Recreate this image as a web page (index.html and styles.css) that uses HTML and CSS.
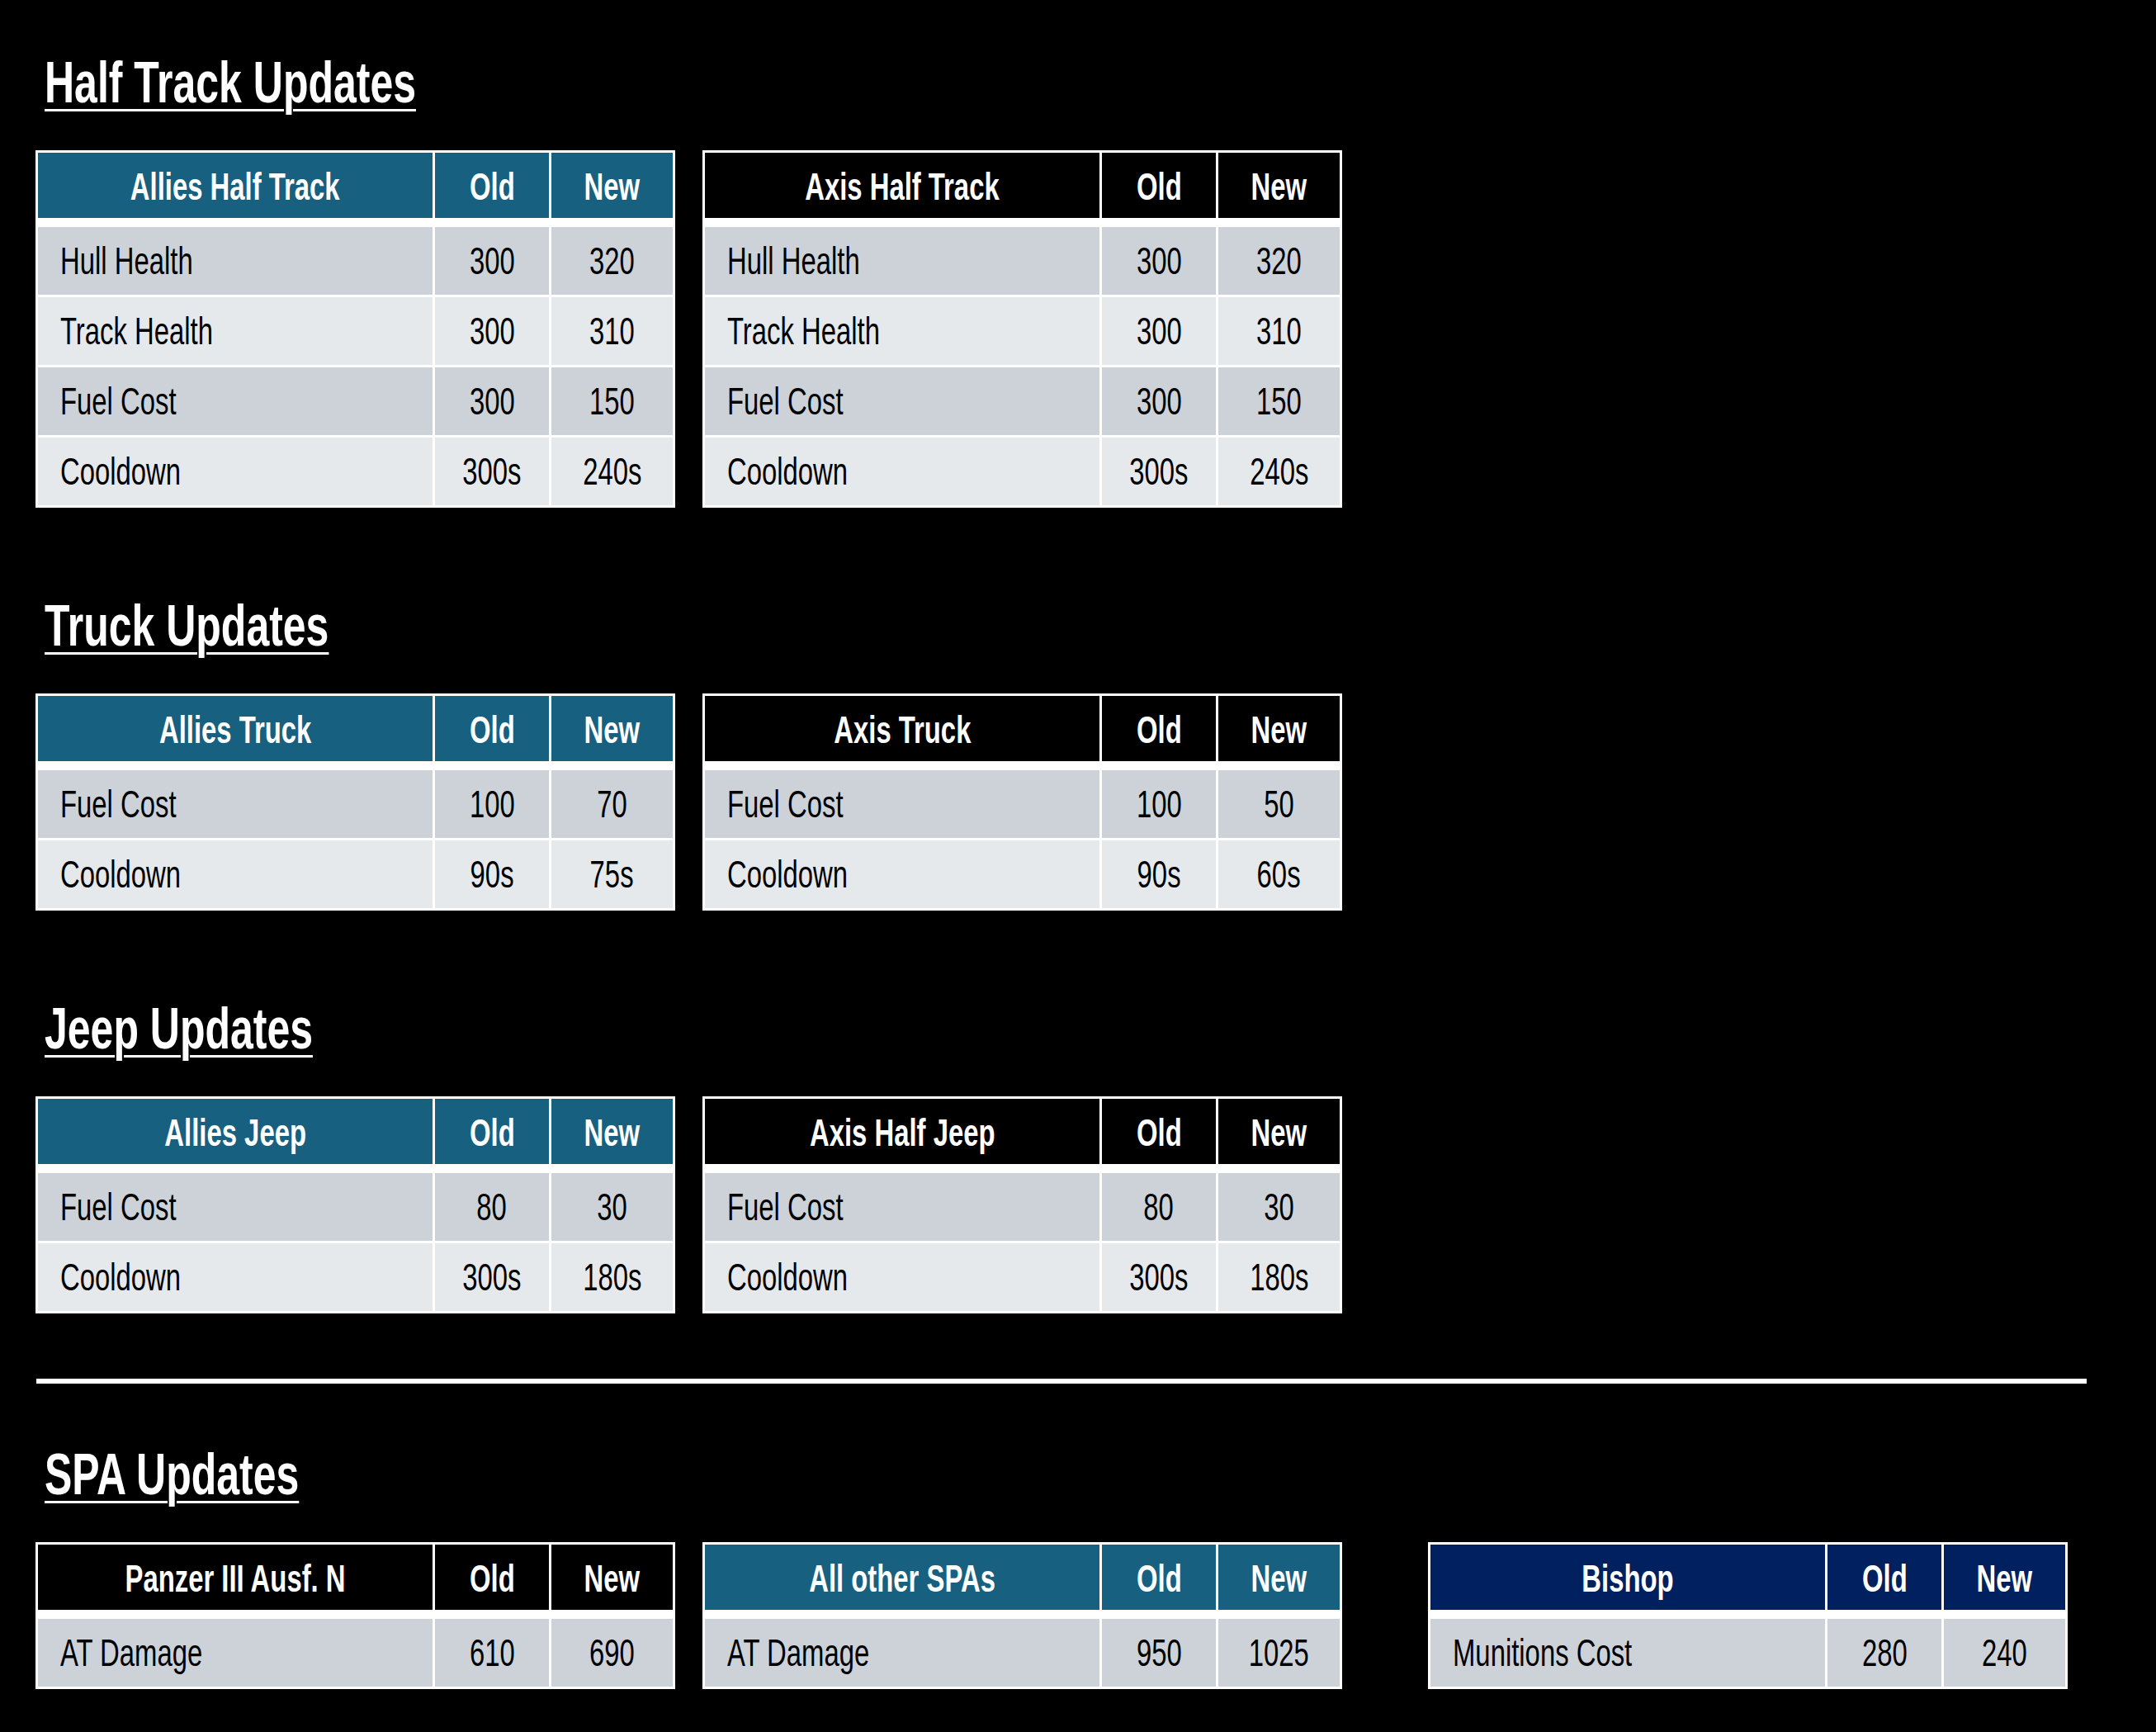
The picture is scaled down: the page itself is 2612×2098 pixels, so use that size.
FILE: index.html
```html
<!DOCTYPE html>
<html lang="en">
<head>
<meta charset="utf-8">
<title>Vehicle Updates</title>
<link rel="stylesheet" href="styles.css">
</head>
<body>
<div class="page">

  <section class="section">
    <h2 class="section-title"><span class="txt">Half Track Updates</span></h2>
    <div class="tables">
      <div class="stat-table allies">
        <div class="row head"><div class="cell label"><span>Allies Half Track</span></div><div class="cell"><span>Old</span></div><div class="cell"><span>New</span></div></div>
        <div class="row body"><div class="cell label"><span>Hull Health</span></div><div class="cell"><span>300</span></div><div class="cell"><span>320</span></div></div>
        <div class="row body"><div class="cell label"><span>Track Health</span></div><div class="cell"><span>300</span></div><div class="cell"><span>310</span></div></div>
        <div class="row body"><div class="cell label"><span>Fuel Cost</span></div><div class="cell"><span>300</span></div><div class="cell"><span>150</span></div></div>
        <div class="row body"><div class="cell label"><span>Cooldown</span></div><div class="cell"><span>300s</span></div><div class="cell"><span>240s</span></div></div>
      </div>
      <div class="stat-table axis">
        <div class="row head"><div class="cell label"><span>Axis Half Track</span></div><div class="cell"><span>Old</span></div><div class="cell"><span>New</span></div></div>
        <div class="row body"><div class="cell label"><span>Hull Health</span></div><div class="cell"><span>300</span></div><div class="cell"><span>320</span></div></div>
        <div class="row body"><div class="cell label"><span>Track Health</span></div><div class="cell"><span>300</span></div><div class="cell"><span>310</span></div></div>
        <div class="row body"><div class="cell label"><span>Fuel Cost</span></div><div class="cell"><span>300</span></div><div class="cell"><span>150</span></div></div>
        <div class="row body"><div class="cell label"><span>Cooldown</span></div><div class="cell"><span>300s</span></div><div class="cell"><span>240s</span></div></div>
      </div>
    </div>
  </section>

  <section class="section">
    <h2 class="section-title"><span class="txt">Truck Updates</span></h2>
    <div class="tables">
      <div class="stat-table allies">
        <div class="row head"><div class="cell label"><span>Allies Truck</span></div><div class="cell"><span>Old</span></div><div class="cell"><span>New</span></div></div>
        <div class="row body"><div class="cell label"><span>Fuel Cost</span></div><div class="cell"><span>100</span></div><div class="cell"><span>70</span></div></div>
        <div class="row body"><div class="cell label"><span>Cooldown</span></div><div class="cell"><span>90s</span></div><div class="cell"><span>75s</span></div></div>
      </div>
      <div class="stat-table axis">
        <div class="row head"><div class="cell label"><span>Axis Truck</span></div><div class="cell"><span>Old</span></div><div class="cell"><span>New</span></div></div>
        <div class="row body"><div class="cell label"><span>Fuel Cost</span></div><div class="cell"><span>100</span></div><div class="cell"><span>50</span></div></div>
        <div class="row body"><div class="cell label"><span>Cooldown</span></div><div class="cell"><span>90s</span></div><div class="cell"><span>60s</span></div></div>
      </div>
    </div>
  </section>

  <section class="section">
    <h2 class="section-title"><span class="txt">Jeep Updates</span></h2>
    <div class="tables">
      <div class="stat-table allies">
        <div class="row head"><div class="cell label"><span>Allies Jeep</span></div><div class="cell"><span>Old</span></div><div class="cell"><span>New</span></div></div>
        <div class="row body"><div class="cell label"><span>Fuel Cost</span></div><div class="cell"><span>80</span></div><div class="cell"><span>30</span></div></div>
        <div class="row body"><div class="cell label"><span>Cooldown</span></div><div class="cell"><span>300s</span></div><div class="cell"><span>180s</span></div></div>
      </div>
      <div class="stat-table axis">
        <div class="row head"><div class="cell label"><span>Axis Half Jeep</span></div><div class="cell"><span>Old</span></div><div class="cell"><span>New</span></div></div>
        <div class="row body"><div class="cell label"><span>Fuel Cost</span></div><div class="cell"><span>80</span></div><div class="cell"><span>30</span></div></div>
        <div class="row body"><div class="cell label"><span>Cooldown</span></div><div class="cell"><span>300s</span></div><div class="cell"><span>180s</span></div></div>
      </div>
    </div>
  </section>

  <hr class="divider">

  <section class="section">
    <h2 class="section-title"><span class="txt">SPA Updates</span></h2>
    <div class="tables">
      <div class="stat-table axis">
        <div class="row head"><div class="cell label"><span>Panzer III Ausf. N</span></div><div class="cell"><span>Old</span></div><div class="cell"><span>New</span></div></div>
        <div class="row body"><div class="cell label"><span>AT Damage</span></div><div class="cell"><span>610</span></div><div class="cell"><span>690</span></div></div>
      </div>
      <div class="stat-table allies">
        <div class="row head"><div class="cell label"><span>All other SPAs</span></div><div class="cell"><span>Old</span></div><div class="cell"><span>New</span></div></div>
        <div class="row body"><div class="cell label"><span>AT Damage</span></div><div class="cell"><span>950</span></div><div class="cell"><span>1025</span></div></div>
      </div>
      <div class="stat-table bishop offset">
        <div class="row head"><div class="cell label"><span>Bishop</span></div><div class="cell"><span>Old</span></div><div class="cell"><span>New</span></div></div>
        <div class="row body"><div class="cell label"><span>Munitions Cost</span></div><div class="cell"><span>280</span></div><div class="cell"><span>240</span></div></div>
      </div>
    </div>
  </section>

</div>
</body>
</html>
```

FILE: styles.css
```css
html, body {
  margin: 0;
  padding: 0;
  background: #000;
}

body {
  font-family: "Liberation Sans Narrow", "Liberation Sans", Arial, sans-serif;
}

.page {
  box-sizing: border-box;
  min-height: 2098px;
  padding: 65px 0 0 43px;
}

.section-title {
  margin: 0 0 47px;
  padding-left: 11px;
  height: 70px;
  font-size: 70px;
  line-height: 70px;
  font-weight: 700;
  color: #fff;
}

.section-title .txt {
  display: inline-block;
  white-space: nowrap;
  transform: scaleX(0.714);
  transform-origin: left center;
  text-decoration: underline;
  text-decoration-thickness: 3px;
  text-underline-offset: 8px;
}

.section + .section {
  margin-top: 108px;
}

.divider {
  display: block;
  width: 2484px;
  height: 6px;
  margin: 79px 0 75px 1px;
  border: 0;
  background: #fff;
}

.tables {
  display: flex;
  align-items: flex-start;
  gap: 33px;
}

.stat-table {
  display: grid;
  grid-template-columns: 478px 138px 147px;
  gap: 3px;
  padding: 3px;
  background: #fff;
}

.stat-table.offset {
  margin-left: 71px;
}

.row {
  display: contents;
}

.cell {
  display: flex;
  align-items: center;
  justify-content: center;
  height: 82px;
  font-size: 46px;
  line-height: 1.15;
  color: #000;
  overflow: visible;
}

.cell span {
  display: inline-block;
  white-space: nowrap;
  transform: scaleX(0.714);
  transform-origin: center center;
}

.row.head .cell {
  height: 79px;
  margin-bottom: 8px;
  font-weight: 700;
  color: #fff;
}

.row.head .cell span {
  position: relative;
  top: 2px;
}

.row.body .cell {
  background: #e6e9ec;
}

.row.body:nth-child(even) .cell {
  background: #cdd2d9;
}

.row.body .cell.label {
  justify-content: flex-start;
  padding-left: 27px;
}

.row.body .cell.label span {
  transform-origin: left center;
}

.allies .row.head .cell {
  background: #18607f;
}

.axis .row.head .cell {
  background: #000;
}

.bishop .row.head .cell {
  background: #002060;
}
```
